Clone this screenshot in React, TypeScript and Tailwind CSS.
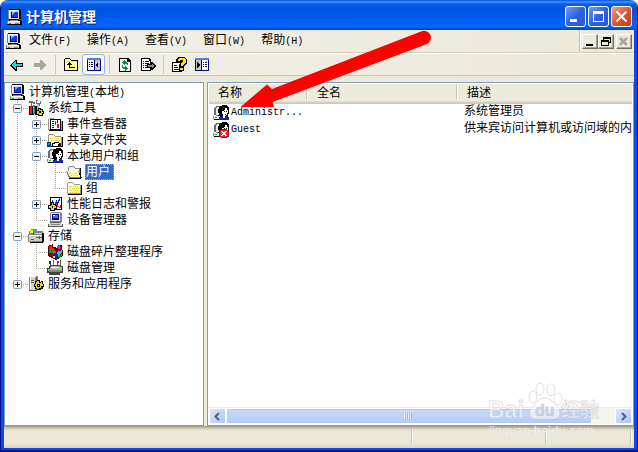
import { Fragment, useState } from 'react'

type Part = [fill: string, d: string]
type Guide = 'line' | 'tee' | 'end' | 'plus' | 'minus' | 'lastPlus'

interface TreeNode {
  label: string
  icon: keyof typeof icons
  guides: Guide[]
}

interface User {
  name: string
  fullName: string
  description: string
  icon: keyof typeof icons
}

// Every icon is a 16x16 stack of filled shapes, painted back to front
const folder: Part[] = [
  ['#9c9c84', 'M1 3h1v-1h5v1h1v1h6v1h1v9h-14z'],
  ['#ffff84', 'M2 3h5v1h1v1h6v8h-12z'],
  ['#fff', 'M2 4h1v9h-1zM3 4h4v1h-4z'],
  ['#e7ce42', 'M3 6h1v1h-1zM5 6h1v1h-1zM7 6h1v1h-1zM9 6h1v1h-1zM11 6h1v1h-1zM4 8h1v1h-1zM6 8h1v1h-1zM8 8h1v1h-1zM10 8h1v1h-1zM12 8h1v1h-1zM3 10h1v1h-1zM5 10h1v1h-1zM7 10h1v1h-1zM9 10h1v1h-1zM11 10h1v1h-1zM4 12h1v1h-1zM6 12h1v1h-1zM8 12h1v1h-1zM10 12h1v1h-1zM12 12h1v1h-1z'],
  ['#000', 'M15 5h1v10h-14v-1h13z'],
]

const gear: Part[] = [
  ['#000', 'M9 4h3v2h1v-1h2v3h1v3h-1v2h-2v1h-4v-1h-2v-2h-1v-3h1v-3h2z'],
  ['#e7d600', 'M9 5h2v2h2v-1h1v2h1v2h-2v2h-2v1h-2v-1h-1v-2h-1v-2h1v-2h1z'],
  ['#000', 'M9 8h3v3h-3z'],
  ['#fff', 'M10 9h1v1h-1z'],
]

const monitor: Part[] = [
  ['#000', 'M3 0h11v1h1v9h-2v1h2v1h1v4h-15v-4h2v-2h-1v-9h1z'],
  ['#848484', 'M2 1h1v9h-1zM1 12h1v3h-1z'],
  ['#ded8cf', 'M3 1h10v9h-10zM2 12h12v3h-12z'],
  ['#fff', 'M3 1h10v1h-9v7h-1zM2 12h11v1h-11z'],
  ['#000084', 'M5 3h7v6h-7z'],
  ['#1435f5', 'M6 3h6v5h-6z'],
  ['#73a5ff', 'M6 3h3v1h-1v1h-1v1h-1z'],
  ['#848484', 'M4 11h8v1h-8zM9 14h4v1h-4z'],
  ['#00c600', 'M3 14h2v1h-2z'],
]

const person: Part[] = [
  ['#6b6b6b', 'M3 1h6v1h-5v1h-1v7h-2v-7h1v-1h1z'],
  ['#e7e7e7', 'M4 2h5v8h-6v-7h1zM1 11h8v3h-8z'],
  ['#848484', 'M0 11h1v3h-1zM3 10h6v1h-6z'],
  ['#000', 'M1 14h8v1h-8zM6 2h1v-1h2v-1h5v1h1v1h1v7h-1v2h-1v1h-7v-1h-2v-1h1v-2h-1v-4h1z'],
  ['#fff', 'M12 3h2v2h1v3h-1v2h-1v1h-3v-2h-1v-3h2v-1h1z'],
  ['#000', 'M11 6h1v1h-1zM13 6h1v1h-1zM12 9h1v1h-1z'],
  ['#1021bd', 'M6 12h3v-1h1v1h3v-1h2v1h1v3h-10z'],
  ['#fff', 'M10 11h2v2h-2z'],
  ['#00c600', 'M2 12h2v1h-2z'],
]

const icons = {
  computer: monitor,
  folder,
  openFolder: [
    ['#848484', 'M2 3h1v-1h5v1h1v1h5v3h1v7h-12l-3-7h2z'],
    ['#f7f7ef', 'M3 3h5v1h1v1h4v2h-10z'],
    ['#ffff9c', 'M1 7h11l3 6h-11z'],
    ['#fff', 'M1 7h11v1h-10z'],
    ['#e7d652', 'M4 9h1v1h-1zM6 9h1v1h-1zM8 9h1v1h-1zM10 9h1v1h-1zM5 11h1v1h-1zM7 11h1v1h-1zM9 11h1v1h-1zM11 11h1v1h-1z'],
    ['#000', 'M14 4h1v9h1v1h-1v1h-12v-1h11v-1l-1-4h1z'],
  ],
  tools: [
    ['#6b6b6b', 'M1 1h4v1h2v2h-2v-1h-1v3h-1v-3h-2zM8 0h2v1h-1v2h3v-2h1v3h-1v2h-3v-2h-1z'],
    ['#000', 'M1 6h5v9h-5zM7 6h4v9h-4z'],
    ['#ff1010', 'M2 6h2v8h-2z'],
    ['#008c8c', 'M5 5h2v9h-2z'],
    ['#00dede', 'M5 6h1v7h-1z'],
    ['#b5b5b5', 'M9 4h2v8h-2z'],
    ['#000', 'M10 8h3v1h2v2h1v3h-1v2h-5v-1h-2v-5h2z'],
    ['#e7d600', 'M11 9h1v1h2v2h1v1h-1v2h-3v-1h-2v-3h2z'],
    ['#000', 'M11 11h2v2h-2z'],
  ],
  events: [
    ...folder,
    ['#000', 'M3 3h11v11h-11z'],
    ['#fff', 'M4 4h9v9h-9z'],
    ['#002184', 'M5 5h2v1h-2zM5 7h2v1h-2zM5 9h2v1h-2zM5 11h2v1h-2zM10 4h1v3h-1z'],
    ['#ef1010', 'M8 5h1v4h-1zM10 8h2v4h-2z'],
  ],
  shared: [
    ...folder,
    ['#000', 'M5 11h2v-1h5v1h2v3h-3v1h-6z'],
    ['#fff', 'M6 12h2v-1h4v1h-1v2h-5z'],
    ['#003984', 'M0 10h4v5h-4z'],
    ['#2184de', 'M1 11h2v2h-2z'],
  ],
  person,
  blocked: [
    ...person,
    ['#b50000', 'M8 7h6v1h1v1h1v5h-1v1h-1v1h-6v-1h-1v-1h-1v-5h1v-1h1z'],
    ['#ff2121', 'M8 8h6v1h1v5h-1v1h-6v-1h-1v-5h1z'],
    ['#fff', 'M8 9h2v1h2v-1h2v1h-1v1h-1v1h1v1h1v1h-2v-1h-2v1h-2v-1h1v-1h1v-1h-1v-1h-1z'],
  ],
  performance: [
    ['#000', 'M3 1h12v13h-12z'],
    ['#fff', 'M4 2h10v11h-10z'],
    ['#002bde', 'M5 4h1v2h1v2h1v-2h1v-2h1v2h1v-2h1v-2h1v3h-1v2h-1v2h-2v-1h-1v2h-1v-2h-1v-2h-1z'],
    ['#ff1010', 'M9 8h1v1h1v1h1v1h1v-2h1v3h-2v-1h-2v-2h-1z'],
    ['#000', 'M4 6h3v2h2v1h1v4h-2v2h-5v-2h-2v-4h2v-1h1z'],
    ['#e7d600', 'M5 7h1v2h2v1h1v2h-2v2h-3v-2h-2v-2h2v-1h1z'],
    ['#000', 'M5 10h1v2h-1z'],
  ],
  devices: [
    ['#848484', 'M4 0h10v1h1v9h-12v-9h1z'],
    ['#e7e7de', 'M4 1h9v8h-9z'],
    ['#000084', 'M5 2h7v6h-7z'],
    ['#4273ff', 'M6 3h5v3h-5z'],
    ['#fff', 'M6 3h2v1h-2z'],
    ['#5a5a5a', 'M1 12h2v-2h11v2h2v3h-15z'],
    ['#d6d6ce', 'M3 11h11v1h1v2h-13v-2h1z'],
    ['#848484', 'M4 12h9v1h-9z'],
  ],
  storage: [
    ['#848484', 'M1 3h2v-2h6v2h6v11h-15v-8h1z'],
    ['#00c6a5', 'M2 2h2v-1h4v4h-6z'],
    ['#ffef00', 'M2 2h3v3h-3z'],
    ['#000', 'M5 5h11v9h-1v1h-13v-1h12v-8h-9z'],
    ['#cecec6', 'M1 7h13v6h-13zM6 5h8v1h-8z'],
    ['#fff', 'M1 7h12v1h-12z'],
    ['#525252', 'M8 9h6v1h-6zM3 11h3v1h-3zM11 8h1v3h-1z'],
  ],
  defrag: [
    ['#5a0000', 'M1 2l5-2v3l5 1v-3h4v5l1 1v5l-7 4l-8-4z'],
    ['#ff1818', 'M2 2l3-1v3l3 1v4h-6z'],
    ['#a50000', 'M2 9h4v4l-4-2z'],
    ['#ef10ef', 'M10 2l3-1l1 3l-3 1zM6 7h3v3h-3z'],
    ['#0021de', 'M7 9l3 1v5l-3-1z'],
    ['#00d6e7', 'M10 8l5-2v3l-4 3z'],
    ['#00a510', 'M3 5h3v4h-3zM11 12l4-2v2l-4 2z'],
    ['#ffef00', 'M6 12h2v2h-2z'],
  ],
  disk: [
    ['#5a5a5a', 'M3 1h1v4h-1zM6 0h1v5h-1zM13 0h1v5h-1z'],
    ['#002bde', 'M2 1h2v3h-2z'],
    ['#e71010', 'M10 1h2v2h-1v3h-1z'],
    ['#00b5b5', 'M6 3h1v3h-1z'],
    ['#424242', 'M3 5h11v1h2v7h-3v2h-11v-2h-2v-5h2v-2h1z'],
    ['#b5b5ad', 'M4 6h9v1h2v4h-14v-2h2v-2h1z'],
    ['#fff', 'M4 7h8v1h-8z'],
    ['#848484', 'M2 10h12v2h-12z'],
    ['#00c600', 'M10 10h2v1h-2z'],
  ],
  services: [
    ['#848484', 'M1 1h2v-1h7v14h-9z'],
    ['#d6d6ce', 'M2 1h5v13h-5z'],
    ['#fff', 'M2 1h1v12h-1zM3 0h5v1h-5z'],
    ['#525252', 'M3 4h3v1h-3zM3 6h3v1h-3zM8 2h1v11h-1zM1 14h8v1h-8z'],
    ...gear,
  ],
  back: [
    ['#000', 'M1 8l5-5h2v3h6v4h-6v4h-2z'],
    ['#00dede', 'M3 7h1v-1h1v-1h1v-1h1v3h6v2h-6v3h-1v-1h-1v-1h-1v-1h-1z'],
  ],
  forward: [['#aca899', 'M2 6h6v-3h1l5 5l-5 5h-1v-3h-6z']],
  up: [
    ['#000', 'M1 2h1v-1h5v1h1v1h7v11h-14z'],
    ['#ffff9c', 'M2 2h5v1h1v1h6v9h-12z'],
    ['#f7de6b', 'M2 4h12v1h-12z'],
    ['#000', 'M4 7h1v-1h1v-1h1v1h1v1h1v1h-2v2h5v1h-6v-3h-2z'],
  ],
  hideTree: [
    ['#000084', 'M1 1h14v13h-14z'],
    ['#5a7bd6', 'M1 1h14v2h-14z'],
    ['#fff', 'M2 3h6v10h-6z'],
    ['#c6c6bd', 'M9 3h5v10h-5z'],
    ['#000', 'M3 5h1v1h-1zM5 5h2v1h-2zM3 7h1v1h-1zM5 7h2v1h-2zM3 9h1v1h-1zM5 9h2v1h-2zM12 5v6l-3-3z'],
  ],
  showTree: [
    ['#000084', 'M1 1h14v13h-14z'],
    ['#5a7bd6', 'M1 1h14v2h-14z'],
    ['#c6c6bd', 'M2 3h5v10h-5z'],
    ['#fff', 'M8 3h6v10h-6z'],
    ['#000', 'M9 5h1v1h-1zM11 5h2v1h-2zM9 7h1v1h-1zM11 7h2v1h-2zM9 9h1v1h-1zM11 9h2v1h-2zM3 5v6l3-3z'],
  ],
  refresh: [
    ['#000', 'M2 1h9l3 3v11h-12z'],
    ['#fff', 'M3 2h7v3h3v9h-10z'],
    ['#008c4a', 'M7 3h1v1h1v1h1v1h1v2h-1v-1h-2v1h-1v-1h-1v-1h-1v-1h1v-1h1zM5 8h1v2h2v-1h1v1h1v1h1v1h-1v1h-1v1h-1v-2h-2v-1h-1z'],
  ],
  exportList: [
    ['#000', 'M1 1h8l2 2v11h-10z'],
    ['#fff', 'M2 2h7v2h1v9h-8z'],
    ['#000084', 'M3 4h1v1h-1zM5 4h4v1h-4zM3 6h1v1h-1zM5 6h4v1h-4zM3 8h1v1h-1zM5 8h3v1h-3zM3 10h1v1h-1zM5 10h3v1h-3z'],
    ['#000', 'M7 7h4v-2h1l4 4l-4 4h-1v-2h-4z'],
    ['#8c8c84', 'M8 8h4v-1h1v1h1v2h-1v1h-1v-1h-4z'],
  ],
  help: [
    ['#000', 'M1 5h10v10h-10z'],
    ['#fff', 'M2 6h8v8h-8z'],
    ['#000084', 'M3 8h3v1h-3zM3 10h4v1h-4zM3 12h5v1h-5z'],
    ['#000', 'M5 3l2-3h7l2 3v3l-3 3v1h-5v-3l2-2h-5z'],
    ['#ffe710', 'M6 3l2-2h5l2 2v2l-3 3v1h-2v-2l2-3l-1-1h-2l-1 1z'],
    ['#000', 'M8 10h5v4h-5z'],
    ['#ffe710', 'M9 11h3v2h-3z'],
  ],
} satisfies Record<string, Part[]>

const menus = ['文件(F)', '操作(A)', '查看(V)', '窗口(W)', '帮助(H)']

const tree: TreeNode[] = [
  { label: '计算机管理(本地)', icon: 'computer', guides: [] },
  { label: '系统工具', icon: 'tools', guides: ['minus'] },
  { label: '事件查看器', icon: 'events', guides: ['line', 'plus'] },
  { label: '共享文件夹', icon: 'shared', guides: ['line', 'plus'] },
  { label: '本地用户和组', icon: 'person', guides: ['line', 'minus'] },
  { label: '用户', icon: 'openFolder', guides: ['line', 'line', 'tee'] },
  { label: '组', icon: 'folder', guides: ['line', 'line', 'end'] },
  { label: '性能日志和警报', icon: 'performance', guides: ['line', 'plus'] },
  { label: '设备管理器', icon: 'devices', guides: ['line', 'end'] },
  { label: '存储', icon: 'storage', guides: ['minus'] },
  { label: '磁盘碎片整理程序', icon: 'defrag', guides: ['line', 'tee'] },
  { label: '磁盘管理', icon: 'disk', guides: ['line', 'end'] },
  { label: '服务和应用程序', icon: 'services', guides: ['lastPlus'] },
]

const users: User[] = [
  { name: 'Administr...', fullName: '', description: '系统管理员', icon: 'person' },
  { name: 'Guest', fullName: '', description: '供来宾访问计算机或访问域的内', icon: 'blocked' },
]

export default function App() {
  const [selected, setSelected] = useState('用户')

  return (
    <div className="flex min-h-screen flex-col overflow-hidden rounded-t-lg border-x border-b-2 border-[#00138c] font-['Liberation_Mono','Noto_Sans_CJK_SC',monospace] text-xs leading-4 text-black">
      <div className="relative flex flex-1 flex-col border-x-3 border-b-2 border-[#0a4be0] bg-[#ece9d8]">
        <TitleBar />
        <MenuBar />
        <Toolbar />
        <main className="flex flex-1 gap-[3px] pt-1.5">
          <nav className="w-[200px] shrink-0 border border-[#7f9db9] bg-white pt-px pl-1">
            <ul>
              {tree.map((node) => (
                <TreeRow
                  key={node.label}
                  node={node}
                  selected={node.label === selected}
                  onSelect={() => setSelected(node.label)}
                />
              ))}
            </ul>
          </nav>
          <section className="flex min-w-0 flex-1 flex-col border border-[#7f9db9] bg-white p-px">
            <UserTable />
            <ScrollBar />
          </section>
        </main>
        <StatusBar />
        <Arrow />
        <Watermark />
      </div>
    </div>
  )
}

// Latin letters are set smaller so that each takes half of a Chinese character
function Label({ text }: { text: string }) {
  return (
    <>
      {text.split(/([ -~]+)/).map((run, i) =>
        i % 2 ? <span key={i} className="text-[10px]">{run}</span> : <Fragment key={i}>{run}</Fragment>
      )}
    </>
  )
}

function Icon({ name }: { name: keyof typeof icons }) {
  const parts: Part[] = icons[name] as Part[]
  return (
    <svg className="h-4 w-4 shrink-0" viewBox="0 0 16 16" shapeRendering="crispEdges" aria-hidden="true">
      {parts.map(([fill, d], i) => (
        <path key={i} fill={fill} d={d} />
      ))}
    </svg>
  )
}

function TitleBar() {
  const button =
    'flex h-[21px] w-[21px] items-center justify-center rounded-[3px] border border-white bg-linear-to-br'
  return (
    <header className="-mx-[3px] flex h-[30px] items-center bg-[linear-gradient(#0a4fd8_0px,#3d95ff_2px,#0a5be8_4px,#0053e1_10px,#005bf0_18px,#0066ff_25px,#0062f5_27px,#0040c0_30px)] pt-[3px] pr-[5px] pl-[5px]">
      <Icon name="computer" />
      <h1 className="ml-1 flex-1 pt-0.5 text-sm font-bold text-white [text-shadow:1px_1px_#0a1883]">计算机管理</h1>
      <div className="flex gap-0.5">
        <button aria-label="最小化" className={`${button} from-[#6f9bf5] via-[#2f62e0] to-[#2457d6]`}>
          <svg width="19" height="19" aria-hidden="true">
            <path fill="#fff" d="M4 12h7v3h-7z" />
          </svg>
        </button>
        <button aria-label="最大化" className={`${button} from-[#6f9bf5] via-[#2f62e0] to-[#2457d6]`}>
          <svg width="19" height="19" aria-hidden="true">
            <path fill="#fff" fillRule="evenodd" d="M4 4h11v11h-11zM5 7v7h9v-7z" />
          </svg>
        </button>
        <button aria-label="关闭" className={`${button} from-[#f0a088] via-[#e2522c] to-[#c83c14]`}>
          <svg width="19" height="19" aria-hidden="true">
            <path stroke="#fff" strokeWidth="2" d="M4.500 4.500l10 10M14.500 4.500l-10 10" />
          </svg>
        </button>
      </div>
    </header>
  )
}

function MenuBar() {
  const button =
    'h-[15px] w-4 border border-t-white border-r-[#716f64] border-b-[#716f64] border-l-white bg-[#ece9d8] shadow-[inset_-1px_-1px_#aca899]'
  return (
    <div className="flex h-[23px] items-center border-b border-[#d0ccbb] bg-linear-to-r from-[#f1f0ea] to-[#ece9d8] pl-px">
      <Icon name="computer" />
      <div className="flex flex-1">
        {menus.map((menu) => (
          <button key={menu} className="px-2">
            <Label text={menu} />
          </button>
        ))}
      </div>
      <div className="flex h-full items-center border-l border-[#c5c2b2] px-0.5 shadow-[inset_1px_0_#fff]">
        <button aria-label="最小化子窗口" className={button}>
          <svg width="14" height="13" aria-hidden="true">
            <path d="M3 9h7v2h-7z" />
          </svg>
        </button>
        <button aria-label="还原子窗口" className={button}>
          <svg width="14" height="13" aria-hidden="true">
            <path fillRule="evenodd" d="M4 2h8v6h-2v3h-8v-6h2zM5 4v1h5v2h1v-3zM3 7v3h6v-3z" />
          </svg>
        </button>
        <button aria-label="关闭子窗口" className={`${button} ml-0.5`} disabled>
          <svg width="14" height="13" aria-hidden="true">
            <path stroke="#fff" strokeWidth="2" d="M4 4l7 7M11 4l-7 7" />
            <path stroke="#aca899" strokeWidth="3" d="M3 3l7 7M10 3l-7 7" />
          </svg>
        </button>
      </div>
    </div>
  )
}

function Toolbar() {
  return (
    <div className="flex h-[23px] items-center border-t border-b border-t-white border-b-[#cbc7b8] bg-linear-to-r from-[#f1f0ea] to-[#ece9d8] pl-px">
      <ToolButton label="后退" icon="back" />
      <ToolButton label="前进" icon="forward" />
      <Separator />
      <ToolButton label="向上" icon="up" />
      <ToolButton label="显示/隐藏控制台树" icon="hideTree" active />
      <Separator />
      <ToolButton label="刷新" icon="refresh" />
      <ToolButton label="导出列表" icon="exportList" />
      <Separator />
      <ToolButton label="帮助" icon="help" />
      <ToolButton label="显示操作窗格" icon="showTree" />
    </div>
  )
}

function ToolButton({ label, icon, active }: { label: string; icon: keyof typeof icons; active?: boolean }) {
  return (
    <button
      aria-label={label}
      aria-pressed={active}
      className={`flex h-[21px] w-[23px] items-center justify-center rounded-[3px] border ${
        active ? 'border-[#98b5d6] bg-white' : 'border-transparent'
      }`}
    >
      <Icon name={icon} />
    </button>
  )
}

function Separator() {
  return <span className="mr-[3px] ml-1 h-[19px] w-px bg-[#cbc7b8]" />
}

function TreeRow({ node, selected, onSelect }: { node: TreeNode; selected: boolean; onSelect: () => void }) {
  return (
    <li className="flex h-4 items-center">
      {node.guides.map((guide, i) =>
        guide === 'plus' || guide === 'minus' || guide === 'lastPlus' ? (
          <button key={i} aria-label={guide === 'minus' ? '折叠' : '展开'}>
            <TreeGuide guide={guide} />
          </button>
        ) : (
          <TreeGuide key={i} guide={guide} />
        )
      )}
      <Icon name={node.icon} />
      <button
        onClick={onSelect}
        className={`ml-[3px] h-4 pr-1 pl-px leading-[18px] whitespace-nowrap ${
          selected ? 'bg-[#316ac5] text-white outline-1 -outline-offset-1 outline-dotted outline-[#e0a050]' : ''
        }`}
      >
        <Label text={node.label} />
      </button>
    </li>
  )
}

function TreeGuide({ guide }: { guide: Guide }) {
  const half = guide === 'end' || guide === 'lastPlus'
  const box = guide === 'plus' || guide === 'minus' || guide === 'lastPlus'
  return (
    <svg className="block h-4 w-[19px] shrink-0" viewBox="0 0 19 16" aria-hidden="true">
      <path stroke="#aca899" strokeDasharray="1 1" d={half ? 'M8.5 0V8' : 'M8.5 0V16'} />
      {guide !== 'line' && <path stroke="#aca899" strokeDasharray="1 1" d="M8 8.5H19" />}
      {box && (
        <>
          <rect x="4.5" y="4.5" width="8" height="8" rx="1" fill="#f6f5f0" stroke="#7b9ebd" />
          <path d={guide === 'minus' ? 'M6 8h5v1h-5z' : 'M6 8h5v1h-5zM8 6h1v5h-1z'} />
        </>
      )}
    </svg>
  )
}

function UserTable() {
  return (
    <div className="flex-1 overflow-hidden">
      <table className="w-full table-fixed border-collapse">
        <colgroup>
          <col className="w-[99px]" />
          <col className="w-[150px]" />
          <col />
        </colgroup>
        <thead>
          <tr className="h-5 bg-[linear-gradient(#ebeadb_17px,#d6d2c2_18px,#cbc7b8_20px)] text-left">
            {['名称', '全名', '描述'].map((title) => (
              <th key={title} className="p-0 font-normal">
                <div className="flex h-5 items-center justify-between pl-[9px]">
                  {title}
                  {title !== '描述' && <span className="mb-1 h-3.5 w-0.5 border-r border-l border-r-white border-l-[#c7c5b2]" />}
                </div>
              </th>
            ))}
          </tr>
        </thead>
        <tbody>
          {users.map((user) => (
            <tr key={user.name} className="h-[17px] leading-[17px] whitespace-nowrap">
              <td className="p-0 pl-1">
                <div className="flex h-[17px] items-center gap-0.5">
                  <Icon name={user.icon} />
                  <Label text={user.name} />
                </div>
              </td>
              <td className="p-0">{user.fullName}</td>
              <td className="overflow-hidden p-0 pl-1.5">{user.description}</td>
            </tr>
          ))}
        </tbody>
      </table>
    </div>
  )
}

function ScrollBar() {
  const button =
    'flex h-4 w-[17px] shrink-0 items-center justify-center rounded-xs border border-white bg-linear-to-br from-[#dbe5fd] to-[#adc5f7]'
  return (
    <div className="flex h-[17px] border-t border-[#eeede5] bg-[#f5f4ee]">
      <button aria-label="向左滚动" className={button}>
        <svg width="9" height="9" aria-hidden="true">
          <path fill="none" stroke="#4d6185" strokeWidth="2" d="M6 1L2.500 4.500L6 8" />
        </svg>
      </button>
      <div className="flex-1">
        <div className="flex h-4 w-[94%] items-center justify-center gap-px rounded-xs border border-white bg-linear-to-b from-[#c9d8fc] to-[#b3cbf9] shadow-[inset_0_0_0_1px_#b5c8f5]">
          {[0, 1, 2, 3].map((i) => (
            <span key={i} className="h-1.5 w-px bg-[#8cb0f8] shadow-[-1px_0_#eef4fe]" />
          ))}
        </div>
      </div>
      <button aria-label="向右滚动" className={button}>
        <svg width="9" height="9" aria-hidden="true">
          <path fill="none" stroke="#4d6185" strokeWidth="2" d="M3 1L6.500 4.500L3 8" />
        </svg>
      </button>
    </div>
  )
}

function StatusBar() {
  return (
    <footer className="flex h-[22px] bg-[linear-gradient(#96947f_0px,#c9c6b5_2px,#ece9d8_5px,#ebe8d7_17px,#dad6c2_22px)] py-[3px] pr-0.5">
      <div className="flex-1 border-r border-white shadow-[inset_-1px_0_#c5c2b0]" />
      <div className="w-[134px] border-r border-white shadow-[inset_-1px_0_#c5c2b0]" />
      <div className="w-[85px] border-r border-white shadow-[inset_-1px_0_#c5c2b0]" />
    </footer>
  )
}

function Arrow() {
  return (
    <svg className="pointer-events-none absolute top-[30px] left-[236px] h-[80px] w-[192px]" viewBox="0 0 192 80" aria-hidden="true">
      <path
        fill="#f00"
        d="M0.500 77L27 54.500L32 59L181 1.500A6.800 6.800 0 0 1 187 14L32.500 72L34 77z"
      />
    </svg>
  )
}

function Watermark() {
  return (
    <svg
      className="pointer-events-none absolute right-8 bottom-2 h-[62px] w-[120px]"
      viewBox="0 0 120 62"
      fill="#fff"
      fillOpacity="0.6"
      stroke="#c4c4c4"
      strokeOpacity="0.55"
      aria-label="Baidu 经验"
    >
      <ellipse cx="51" cy="19" rx="4" ry="6" />
      <ellipse cx="58" cy="11" rx="4" ry="6" />
      <ellipse cx="69" cy="12" rx="4" ry="6" />
      <ellipse cx="76" cy="21" rx="4" ry="6" />
      <path d="M63 20c6 0 8 5 12 9c5 5 3 12-3 12h-18c-7 0-8-7-4-11c5-5 6-10 13-10z" />
      <g className="font-['Liberation_Sans','Noto_Sans_CJK_SC',sans-serif]">
        <text x="6" y="40" className="text-[23px] font-bold">Bai</text>
        <text x="53" y="38" className="text-[16px] font-bold" fill="#b9c4dc">du</text>
        <text x="79" y="39" className="text-[19px] font-bold">经验</text>
        <text x="7" y="57" className="text-[13px]" strokeOpacity="0.25" fillOpacity="0.9">jingyan.baidu.com</text>
      </g>
    </svg>
  )
}
